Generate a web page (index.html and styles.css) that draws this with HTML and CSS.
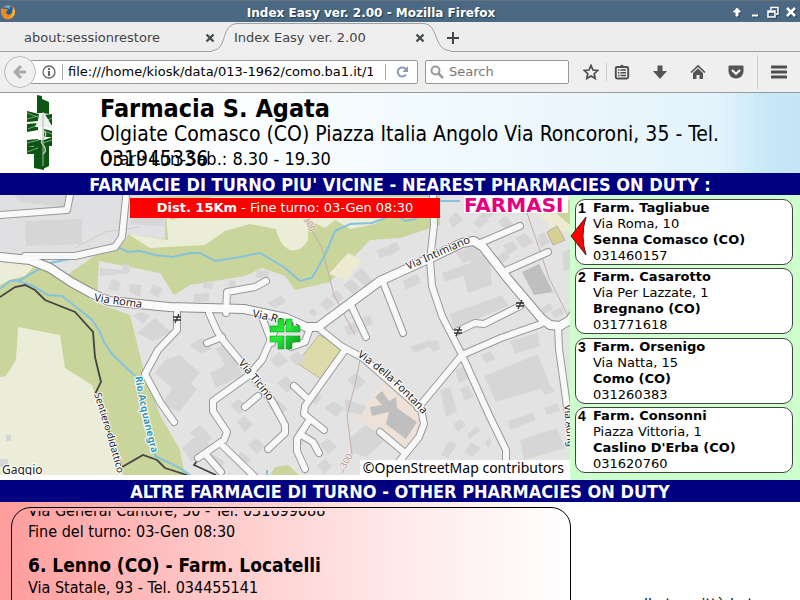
FILE: index.html
```
<!DOCTYPE html>
<html lang="it">
<head>
<meta charset="utf-8">
<title>Index Easy ver. 2.00</title>
<link rel="stylesheet" href="styles.css">
</head>
<body>
<header class="titlebar">
  <svg class="fx" viewBox="0 0 16 16" aria-hidden="true">
    <circle cx="8" cy="8" r="7" fill="#e8681a"/>
    <circle cx="8" cy="6.500" r="5" fill="#1d5c9c"/>
    <path d="M4 3q3-3 7-1q-2 1-1 3z" fill="#58b0de"/>
    <path d="M1 4q1 2 3 1q3-1 4 1q-2 1-2 3q2 3 5 1q2-2 1-5q4 4 1 8q-3 3-7 2q-6-2-5-11z" fill="#f08a1c"/>
    <path d="M13 3q3 4 1 8q-2 3-5 3q5-3 4-11z" fill="#f8c63a"/>
  </svg>
  <span class="title">Index Easy ver. 2.00 - Mozilla Firefox</span>
  <span class="winbtns">
    <button type="button" aria-label="Shade"><svg viewBox="0 0 12 12"><path d="M6 2L2.500 6H5v4h2V6h2.500z" fill="#fff" stroke="#fff"/></svg></button>
    <button type="button" aria-label="Minimize"><svg viewBox="0 0 12 12"><path d="M3 9.500h6" stroke="#fff" stroke-width="2"/></svg></button>
    <button type="button" aria-label="Restore"><svg viewBox="0 0 12 12"><path d="M4 4V1.500h7V8H9M1 5h7v6H1zM1 6h7" fill="none" stroke="#fff" stroke-width="1.500"/></svg></button>
    <button type="button" aria-label="Close"><svg viewBox="0 0 12 12"><path d="M2 2l8 8M10 2l-8 8" stroke="#fff" stroke-width="2.500"/></svg></button>
  </span>
</header>
<nav class="tabs">
  <div class="tab"><span>about:sessionrestore</span><button type="button" aria-label="Close tab"><svg viewBox="0 0 10 10"><path d="M1.500 1.500l7 7M8.500 1.500l-7 7" stroke="#464e4e" stroke-width="2.400"/></svg></button></div>
  <div class="tab active">
    <svg class="shape" viewBox="0 0 240 30" aria-hidden="true"><path d="M2 29C18 29 10 1 28 1H213C229 1 223 29 240 29V30H2z" fill="#efefef"/><path d="M2 28.500C18 28.500 10 1.500 28 1.500H213C229 1.500 223 28.500 240 28.500" fill="none" stroke="#9aa0a6"/></svg>
    <span>Index Easy ver. 2.00</span><button type="button" aria-label="Close tab"><svg viewBox="0 0 10 10"><path d="M1.500 1.500l7 7M8.500 1.500l-7 7" stroke="#464e4e" stroke-width="2.400"/></svg></button></div>
  <button type="button" class="newtab" aria-label="New tab"><svg viewBox="0 0 12 12"><path d="M6 0v12M0 6h12" stroke="#444" stroke-width="2"/></svg></button>
</nav>
<div class="toolbar">
  <button type="button" class="back" aria-label="Back"><svg viewBox="0 0 16 16"><path d="M9 2L3 8l6 6M3 8h11" fill="none" stroke="#aaa" stroke-width="3"/></svg></button>
  <div class="urlbox">
    <svg viewBox="0 0 14 14" aria-hidden="true"><circle cx="7" cy="7" r="6" fill="none" stroke="#666" stroke-width="1.300"/><path d="M7 3v2M7 6v5" stroke="#555" stroke-width="1.800"/></svg>
    <i class="sep"></i>
    <input aria-label="Address" value="file:///home/kiosk/data/013-1962/como.ba1.it/1">
    <i class="sep"></i>
    <button type="button" aria-label="Reload"><svg viewBox="0 0 14 14"><path d="M11 9.500a4.500 4.500 0 1 1 0-5" fill="none" stroke="#8a9db0" stroke-width="2"/><path d="M13 1v6H7.500z" fill="#8a9db0"/></svg></button>
  </div>
  <div class="searchbox">
    <svg viewBox="0 0 14 14" aria-hidden="true"><circle cx="5.500" cy="5.500" r="4" fill="none" stroke="#999" stroke-width="2"/><path d="M8.500 8.500L13 13" stroke="#999" stroke-width="2.500"/></svg>
    <input aria-label="Search" placeholder="Search">
  </div>
  <div class="tools">
    <button type="button" aria-label="Bookmark"><svg viewBox="0 0 16 16"><path d="M8 1.500l2 4.500 4.800.5-3.600 3.200 1 4.800L8 12l-4.200 2.500 1-4.800L1.200 6.500 6 6z" fill="none" stroke="#4d4d4d" stroke-width="1.700"/></svg></button>
    <button type="button" aria-label="Library" class="lined"><svg viewBox="0 0 16 16"><path d="M5 3l3-2.500L11 3z" fill="#4d4d4d"/><rect x="1.800" y="3" width="12.400" height="11.500" rx="1.500" fill="none" stroke="#4d4d4d" stroke-width="1.900"/><path d="M4 6h1.500M4 8.700h1.500M4 11.400h1.500M6.500 6H12M6.500 8.700H12M6.500 11.400H12" stroke="#4d4d4d" stroke-width="1.500"/></svg></button>
    <button type="button" aria-label="Downloads"><svg viewBox="0 0 16 16"><path d="M5.500 1.500h5V7H15l-7 8L1 7h4.500z" fill="#555"/></svg></button>
    <button type="button" aria-label="Home"><svg viewBox="0 0 16 16"><path d="M1 8.500L8 2l7 6.500" fill="none" stroke="#555" stroke-width="1.700"/><path d="M3 9l5-4.600L13 9v6H9.500v-4h-3v4H3z" fill="#555"/></svg></button>
    <button type="button" aria-label="Pocket"><svg viewBox="0 0 16 16"><path d="M1.500 1.500h13q1 0 1 1V7.500a7.500 7 0 0 1-15 0V2.500q0-1 1-1z" fill="#555"/><path d="M4 6l4 3.800L12 6" fill="none" stroke="#fff" stroke-width="2"/></svg></button>
    <button type="button" aria-label="Menu" class="menu"><svg viewBox="0 0 16 16"><path d="M1 3h14M1 8h14M1 13h14" stroke="#4d4d4d" stroke-width="3" stroke-linecap="round"/></svg></button>
  </div>
</div>

<main class="page">
  <section class="pharmacy">
    <svg class="logo" viewBox="0 0 30 76" aria-hidden="true">
      <path d="M11 1l5 1v17l-5 0zM16 5l7 3v12l-7-1zM1 17l12 3-1 7-11 1zM26 20l-8 1v12l8-2zM1 30l11-1v7L1 38zM18 35l8 2v6h-8zM1 46l11-1v6L1 53zM18 46l8-3v9h-8zM1 53l11-1v8L1 60zM8 46l10 0v30l-10-2zM17 49l6-1v24l-6 3z" fill="#0c5512"/>
      <path d="M1 19l11 4M1 25l11-3M2 35l10-4M26 24l-8 4M26 40l-8-3M1 49l12-3M26 46l-9 3M1 58l11-4" stroke="#78a77b" stroke-width="1"/>
      <path d="M17 18l5 7 5 9-8-1-2 3-2-3-6 0 4-9z" fill="#eef2ee"/>
      <path d="M17 20v52" stroke="#a9baa9" stroke-width="1"/>
      <path d="M17 36q5 4 1 8q-5 4 0 8q3 5-1 8" fill="none" stroke="#bbc8bb" stroke-width="1.500"/>
    </svg>
    <div class="info">
      <h1>Farmacia S. Agata</h1>
      <p class="address">Olgiate Comasco (CO) Piazza Italia Angolo Via Roncoroni, 35 - Tel. 031945336</p>
      <p class="hours">Orari: Lun-Sab.: 8.30 - 19.30</p>
    </div>
  </section>
  <h2 class="band">FARMACIE DI TURNO PIU' VICINE - NEAREST PHARMACIES ON DUTY :</h2>
  <section class="nearest">
    <div class="mapbox">
      <svg class="map" viewBox="0 195 570 280" preserveAspectRatio="xMinYMin slice">
        <rect y="195" width="570" height="280" fill="#e3e3e3"/>
        <path d="M0 252L75 252 115 246 125 240 140 247 180 248 230 240 300 195H0V195z" fill="#e0e0e2"/>
        <path d="M125 197L210 195H440V225L400 238 370 240 330 282 295 290 285 276 262 268 245 276 190 285 174 295 160 273 99 261 97 296 60 280 30 260 0 258V475H185L180 450 160 415 145 375 130 315 97 303 60 280 100 252 122 241z" fill="#c9d59b"/>
        <path d="M125 197h40v42l-37-5-2 6-8 4z" fill="#e0e0e5"/>
        <path d="M165 197H440L400 205 375 224 350 229 335 220 325 228 308 220 308 240Q302 252 290 250Q280 246 276 229L250 224 225 231 205 245 150 248 128 234 168 240z" fill="#ebedd7"/>
        <path d="M158 197h53l-15 18-25 5z" fill="#c9d59b"/>
        <path d="M0 260L40 260 25 276 10 280 0 285zM18 327L60 335 65 368 92 385 123 475H0V377L6 376 16 360z" fill="#ecedd8"/>
        <path d="M348 253l14 7-15 20-18-6zM545 196h25v37l-20-7-18-17z" fill="#ecebd2"/>
        <path d="M557 200h13v25l-20-17z" fill="#c9d59b"/>
        <path d="M270 475l5-8 13-2 11 10z" fill="#c9d59b"/>
        <path d="M390 375l33 36v16l-22 30-45-42z" fill="#eee2d8"/>
        <path d="M319 335l26 13-24 31-24-16z" fill="#dcdba9" stroke="#c4b2a0"/>
        <path d="M547 232l10-6 8 14-12 5z" fill="#d5d194" stroke="#c0ac9a"/>
        <g fill="#d6d6d7">
          <path d="M25 221l57-2v25l-56 2zM14 195h55v13l-49-6zM131 217h33v9l-34-2zM100 268l22 2 2-6 6 1-1 8-29 3zM112 279l9 3-3 10-10-3zM130 284l12 1-2 12-11-5zM152 284l11 5-5 9-8-5zM194 294h10v7h-10zM132 315l10-3 8 4-7 8zM155 318l16 14-18 9-16-8z"/>
          <path d="M195 294l14-1v8l-15 1zM257 269l13 3-3 7-11-2zM204 282l9 1-1 6-9-1zM230 280l6 1-1 6-7-1zM267 303l15-8 4 7-11 6zM308 312l5-4 5 5-4 4zM320 304l8-7 7 7-8 7zM330 296l7-6 7 8-6 5zM343 285l8-6 9 8-6 8zM353 275l9-7 12 14-8 6zM376 250l10-3 3 7-9 4zM389 245l8-3 3 8-8 3zM362 318l8-3 3 9-9 3zM344 327l10-5 5 9-11 5z"/>
          <path d="M442 273l28-10 2-5 17-5 3 32-24 8-4-17-19 6zM450 314l52-19 7 11-55 22zM473 223l9-9 7 7-10 7zM448 220l8-8 7 8-10 8zM476 210l11-7 10 9-10 7zM498 221l8-5 7 8-8 6zM455 252l20-6 7 10-19 7zM403 281l14-7 4 9-15 7zM384 248l9-3 3 8-10 4zM497 257l8-6 5 6-8 7zM515 238l10-5 9 9-11 6zM537 236l7-4 6 10-9 6zM562 253l8-4v20l-6 3zM503 245l10-4 5 8-10 6z"/>
          <path d="M165 360l15-5 20 18-20 22-25-22zM181 375l16 14-18 23-17-8zM182 448l17-15 12 13-20 16zM190 345l12-7 10 11-11 5zM222 360l12-8 9 9-14 11zM190 433l10-8 12 13-7 7zM210 373l24-12 10 14-28 13zM215 349l12-6 8 10-12 6z"/>
          <path d="M270 360l9-8 9 9-10 7zM277 383l9-7 10 9-9 8zM289 358l8-7 9 7-9 8zM230 405l9-6 8 7-8 8zM237 422l7-6 9 8-8 8zM248 445l8-7 9 8-8 8zM269 407l9-7 10 9-10 8zM292 440l7-14 9 4-6 15zM325 408l8-7 11 7-8 9zM345 399l21 7-4 9-17-4zM347 380l8-7 11 8-9 9zM320 444l8-6 9 9-9 7zM317 465l8-6 7 7-7 8zM350 438l16-13 20 14-20 18-15-5zM307 399l7-10 8 8-6 8zM213 454l12 8-6 8-10-7zM241 451l10 9-7 6-8-7z"/>
          <path d="M410 347l20-7 4 5-20 8zM428 342l10-2 2 9-7 3zM455 370l10-4 5 12-11 5zM460 389l8-4 6 12-9 4zM440 390l10-3 7 25-11 5zM453 424l8-5 5 6-8 7zM441 455l8-14 8 3-9 14zM471 442l10 6-9 9-8-5zM467 435l10-9 3 5-10 8zM485 443l4-6 3 5-4 6zM484 376l54-22 12 32-54 16zM510 341l28-8 2 13-25 8zM508 421l25-8 3 7-26 10zM520 440l37-12 8 20-41 12zM544 408l14-5 2 8-13 4zM481 355l9-4 6 8-10 4zM540 385l8-2 7 8-10 4zM541 308l9-5 3 6-8 5zM551 312l11-5 2 7-10 5z"/>
          <path d="M6 435h5v6H6zM0 459h8v8H0z"/>
        </g>
        <path d="M522 272l17-8 14 28-19 3zM375 397l7-6 7 10 7-4 1 11 20 14-11 17-20-15 3-12-17 4-2-9 12-2z" fill="#bfbfbf"/>
        <path d="M306 219L322 248 334 295 355 335M360 360l-5 25-8 30 5 40-10 18M527 213l12 35 10 30 20 40" fill="none" stroke="#c7aea6"/>
        <path d="M75 248l30-16 35-5" fill="none" stroke="#d2ccc8"/>
        <path d="M0 289l10-8 10-1 30-17 20-4 30-7 20-4 8 4 12-1 15 4 17 2 18-4 10 0 15 8 25-4 20-4 12 7 13 8 15 13 12-3 13-23 10-24 15-7 22-1 23-9 10 7 10-2 25-18h20M15 280l18 6 15 9 14 1 18 14 12 10 8 12 4 10 8 12 23 22 20 80 25 12 20 14M267 470v5" fill="none" stroke="#86c2dc" stroke-width="2"/>
        <path d="M0 297l15-10 10-2 10 5 10 10 30 12 18 20 2 25 6 25-6 12L122 467M122 467l21-12 14 5 8 8 22 7M200 457l-6 8 22 10" fill="none" stroke="#444" stroke-width="1.800"/>
        <defs>
          <path id="minor" d="M0 215l67-5 3-15M25 256l50 0 40-9 7-10 4-40M226 313l1-21 28-5 11-6M209 313l8 18 5 8 28 34 22 28 13 24v8l-17 16M275 330l-13 30-14 16-35 25v10l14 21-3 8-26 18M220 443l37 36M207 456l14 16M258 396l-13 11M222 337l-15 6M262 317l10 26M321 330l20 16 22 12 58 51 3 15-5 13-21 26M345 350L305 406l-1 8 20 16M310 419l-13 20v12l8 18M303 436l10 6 6 11M294 386l14 13M380 432l25 21M310 328l-5 14-14 5M433 195l1 30-4 35 2 26 10 30 20 39 27 60 17 35v25M478 244l42-18M503 272l45-20M383 282l20 51M352 307l14 30M456 332l19-9 9 1 36-18M541 324l-40 14-39 17-44 53M558 326l1 23 7 50 4 30M177 313v17l-19 20-13 24 15 28 14 20"/>
          <path id="major" d="M0 257l30 3 20 8 21 14 20 11 18 8 60 6 75 2 42 9 20 9 12 0 8-6 54-40 55-25 27-13 12-2 9 6 25 32 34 40 8 6 10 1 10-6 8-12"/>
        </defs>
        <g fill="none" stroke-linejoin="round" stroke-linecap="round">
          <use href="#minor" stroke="#999" stroke-width="8"/><use href="#major" stroke="#8d8d8d" stroke-width="10"/>
          <use href="#minor" stroke="#f8f8f8" stroke-width="6"/><use href="#major" stroke="#fafafa" stroke-width="8"/>
        </g>
        <path d="M173 317h8M173 320h8M179 314l-4 9M516 303h8M516 306h8M522 300l-4 9M454 330h8M454 333h8M460 327l-4 9" stroke="#333" stroke-width="1.300"/>
        <defs>
          <path id="p1" d="M94 301Q113 304 150 309"/><path id="p2" d="M252 317Q278 321 306 335"/><path id="p3" d="M408 270L476 240"/><path id="p4" d="M238 363L274 408"/><path id="p5" d="M357 356Q390 378 426 418"/><path id="p6" d="M94 394Q106 430 125 500"/><path id="p7" d="M135 377Q140 410 156 470"/><path id="p8" d="M564 405L570 470"/><path id="p9" d="M303 219l12 20"/><path id="p10" d="M345 469l12-20"/>
        </defs>
        <g class="maptext">
          <text><textPath href="#p1">Via Roma</textPath></text><text><textPath href="#p2">Via Roma</textPath></text><text><textPath href="#p3">Via Intimiano</textPath></text><text><textPath href="#p4">Via Ticino</textPath></text><text><textPath href="#p5">Via della Fontana</textPath></text><text class="trail"><textPath href="#p6">Sentiero didattico</textPath></text><text class="river"><textPath href="#p7">Rio Acquanegra</textPath></text><text class="trail"><textPath href="#p8">Via Aurig</textPath></text><text class="contour"><textPath href="#p9">300</textPath></text><text class="contour"><textPath href="#p10">300</textPath></text>
          <text x="2" y="474" class="place">Gaggio</text>
        </g>
        <linearGradient id="gr" x1="0" y1="0" x2="1" y2="1"><stop offset="0" stop-color="#17c72b"/><stop offset=".45" stop-color="#29ee3c"/><stop offset="1" stop-color="#05881b"/></linearGradient>
        <path d="M278 319h6v13h-14v-6h8zM286 319h6v7h8v6h-14zM270 336h14v13h-6v-7h-8zM286 336h14v6h-8v7h-6z" fill="url(#gr)" stroke="#12a82a" stroke-width=".6"/>
      </svg>
      <p class="distance"><b>Dist. 15Km</b> - Fine turno: 03-Gen 08:30</p>
      <span class="brand">FARMASI</span>
      <span class="credit">©OpenStreetMap contributors</span>
    </div>
    <ol class="cards">
      <li><span class="num">1</span><div><b>Farm. Tagliabue</b><span>Via Roma, 10</span><b>Senna Comasco (CO)</b><span>031460157</span></div>
        <svg class="arrow" viewBox="0 0 18 40" aria-hidden="true"><path d="M1 20L16 1Q10 20 16 39z" fill="#f00" stroke="#422"/></svg></li>
      <li><span class="num">2</span><div><b>Farm. Casarotto</b><span>Via Per Lazzate, 1</span><b>Bregnano (CO)</b><span>031771618</span></div></li>
      <li><span class="num">3</span><div><b>Farm. Orsenigo</b><span>Via Natta, 15</span><b>Como (CO)</b><span>031260383</span></div></li>
      <li><span class="num">4</span><div><b>Farm. Consonni</b><span>Piazza Vittoria, 1</span><b>Caslino D'Erba (CO)</b><span>031620760</span></div></li>
    </ol>
  </section>
  <h2 class="band">ALTRE FARMACIE DI TURNO - OTHER PHARMACIES ON DUTY</h2>
  <section class="others">
    <div class="pink"><div class="panel"><div class="scroller">
      <p>Via General Cantore, 50 - Tel. 031699688</p>
      <p>Fine del turno: 03-Gen 08:30</p>
      <h3>6. Lenno (CO) - Farm. Locatelli</h3>
      <p>Via Statale, 93 - Tel. 034455141</p>
    </div></div></div>
    <aside>nella tua città la tua</aside>
  </section>
</main>
</body>
</html>
```
FILE: styles.css
```
* { box-sizing: border-box; }
body { margin: 0; height: 100vh; overflow: hidden; display: flex; flex-direction: column; background: #fff; color: #000; font: 13px/16px "DejaVu Sans", sans-serif; }
h1, h2, h3, p, ol { margin: 0; padding: 0; }
button { border: 0; padding: 0; background: none; display: flex; align-items: center; justify-content: center; }
input { border: 0; padding: 0; background: none; font: inherit; outline: 0; min-width: 0; }
svg { display: block; }

.titlebar { flex: none; height: 22px; background: #4b6983; border-top: 1px solid #5f7480; display: grid; grid-template-columns: 80px 1fr 80px; align-items: center; color: #fff; }
.fx { width: 16px; height: 16px; }
.title { text-align: center; font-weight: bold; font-size: 12px; line-height: 16px; padding: 2px 58px 0 0; text-shadow: 1px 1px 1px #24384a; }
.winbtns { display: flex; justify-content: flex-end; gap: 6px; padding-right: 3px; }
.winbtns svg { width: 12px; height: 12px; filter: drop-shadow(1px 1px 0 #2d4254); }

.tabs { flex: none; height: 30px; display: flex; background: #ededed; box-shadow: inset 0 -1px #9aa0a6; color: #444; }
.tab { width: 215px; margin-right: -5px; display: flex; align-items: center; justify-content: space-between; padding: 2px 0 0 24px; position: relative; }
.tab.active { width: 240px; margin: 0; padding: 2px 25px 0 24px; }
.tab span, .tab button { position: relative; }
.tab button svg { width: 10px; height: 10px; }
.tab .shape { position: absolute; left: 0; top: 0; width: 240px; height: 30px; }
.newtab { margin-left: -3px; padding-top: 2px; }
.newtab svg { width: 12px; height: 12px; }

.toolbar { flex: none; height: 41px; display: flex; align-items: center; background: #efefef; border-bottom: 1px solid #999; padding: 0 0 1px 4px; color: #111; }
.back { width: 32px; height: 32px; flex: none; border: 1px solid #bbb; border-radius: 16px; background: #f0f0f0; position: relative; }
.back svg { width: 16px; height: 16px; }
.urlbox, .searchbox { height: 24px; background: #fff; border: 1px solid #999; border-radius: 2px; display: flex; align-items: center; }
.urlbox { flex: 1 1 388px; margin-left: -6px; padding: 0 8px 0 11px; }
.urlbox svg { width: 14px; height: 14px; flex: none; }
.urlbox input { flex: 1; width: 0; margin-right: 6px; }
.sep { width: 1px; height: 16px; background: #aaa; margin: 0 5px 0 6px; }
.urlbox button { padding-left: 4px; }
.searchbox { flex: 0 1 144px; margin-left: 7px; padding-left: 4px; gap: 5px; }
.searchbox svg { width: 14px; height: 14px; flex: none; }
.searchbox input { flex: 1; width: 0; }
.searchbox input::placeholder { color: #777; opacity: 1; }
.tools { display: flex; padding: 0 13px 0 14px; gap: 22px; align-items: center; }
.tools svg { width: 16px; height: 16px; }
.tools .lined { border-left: 1px solid #ccc; padding-left: 7px; margin-left: -15px; height: 18px; }
.tools .menu { border-left: 1px solid #ccc; padding-left: 13px; margin-left: -9px; height: 34px; }

.page { flex: 1; min-height: 0; display: flex; flex-direction: column; font-family: "DejaVu Sans Condensed", "DejaVu Sans", sans-serif; }
.pharmacy { flex: none; display: flex; height: 80px; background: linear-gradient(90deg, #fff 20%, #f3fbfe 48%, #e9f5fc 78%, #e1f3fb 90%, #c7e8f8 96%, #c4e4f7); }
.logo { width: 30px; height: 76px; margin: 1px 44px 0 26px; flex: none; }
.info { flex: 1; padding: 2px 76px 0 0; }
h1 { font-size: 25px; line-height: 27px; }
.address { font-size: 21px; line-height: 25px; height: 26px; }
.hours { font-size: 18px; line-height: 22px; }
.band { flex: none; height: 22px; background: #000080; color: #fff; text-align: center; font-size: 18px; line-height: 23px; }

.nearest { flex: none; display: flex; height: 285px; }
.mapbox { flex: 1; position: relative; overflow: hidden; }
.map { width: 100%; height: 280px; }
.maptext { font: 11px "Noto Sans", sans-serif; fill: #222; stroke: #fff; stroke-width: 2px; paint-order: stroke; stroke-linejoin: round; }
.maptext .trail { font-size: 10px; }
.maptext .river { fill: #3797b8; font-weight: bold; font-size: 10px; }
.maptext .contour { fill: #b28b7f; stroke-width: 1px; font-size: 9px; }
.maptext .place { font-size: 12px; }
.distance { position: absolute; left: 130px; top: 3px; width: 310px; height: 20px; background: #f00; color: #fff; text-align: center; font-family: "DejaVu Sans", sans-serif; line-height: 19px; }
.brand { position: absolute; right: 2px; top: 1px; width: 104px; height: 17px; background: #fff; color: #e6007e; font: bold 20px/18px "DejaVu Sans", sans-serif; }
.credit { position: absolute; right: 0; bottom: 0; height: 20px; padding: 0 6px 0 3px; background: #fff; font: 14px/15px "Noto Sans", sans-serif; }
.cards { width: 230px; flex: none; list-style: none; background: #ccffcc; padding: 4px 7px 7px 5px; display: flex; flex-direction: column; justify-content: space-between; font-family: "DejaVu Sans", sans-serif; }
.cards li { position: relative; display: flex; background: #fff; border: 1px solid #444; border-radius: 10px; height: 66px; padding-left: 2px; }
.cards b, .cards div span { display: block; }
.num { width: 15px; font: bold 14px/17px "Liberation Sans", sans-serif; }
.arrow { position: absolute; left: -6px; top: 16px; width: 18px; height: 40px; }

.others { flex: 1; min-height: 0; display: flex; overflow: hidden; }
.pink { flex: 1; background: linear-gradient(90deg, #ff9c9c, #ffc6c6 35%, #ffe8e8 68%, #fff); padding: 5px 0 0 11px; }
.panel { height: 140px; margin-right: -1px; border: 1px solid #000; border-radius: 20px; padding: 3px 16px; }
.scroller { overflow: hidden; height: 130px; font-size: 16px; line-height: 21px; }
.scroller p:first-child { margin-top: -11px; }
h3 { font-size: 19px; line-height: 23px; margin-top: 12px; }
.others aside { width: 230px; padding: 93px 0 0 56px; font-size: 16px; line-height: 20px; }
```
